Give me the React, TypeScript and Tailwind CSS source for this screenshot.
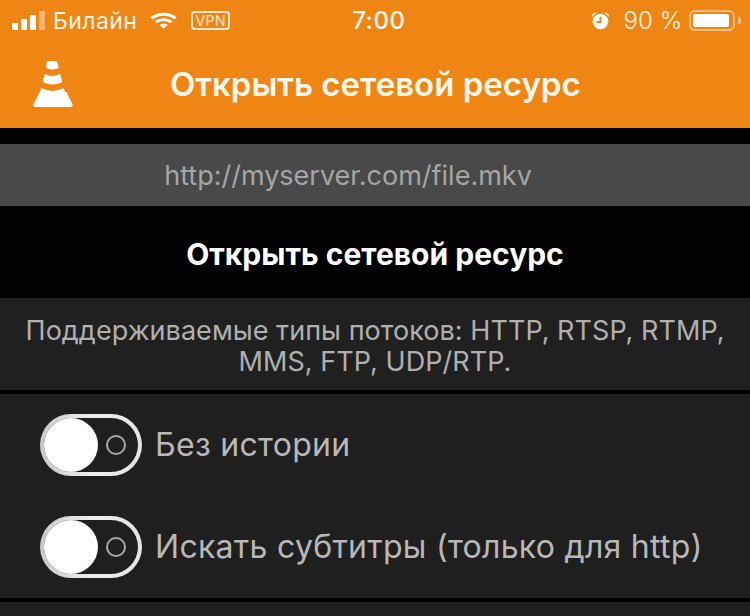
export default function App() {
  const font = { fontFamily: 'Inter, "Noto Sans", sans-serif' };
  const Toggle = () => (
    <div className="relative h-[62px] w-[102px] shrink-0 rounded-full bg-gradient-to-r from-[#c8c8c8] via-[#eeeeee] to-[#e4e4e4] p-[4px]">
      <div className="flex h-full w-full items-center rounded-full bg-[#1f1f1f]">
        <div className="h-[54px] w-[54px] rounded-full bg-white" />
        <div className="ml-[8px] h-[20px] w-[20px] rounded-full border-2 border-[#a8a8a8]" />
      </div>
    </div>
  );
  const Row = ({ label }: { label: string }) => (
    <div className="flex items-center pl-[40px]">
      <Toggle />
      <span className="ml-[13px] text-[32px] leading-[40px] tracking-[0.28px] text-[#b8b8b8] whitespace-nowrap">{label}</span>
    </div>
  );
  return (
    <div className="h-[616px] w-[750px] overflow-hidden bg-black" style={font}>
      <header className="h-[128px] bg-[#ef8614] text-white">
        <div className="flex h-[40px] items-center pl-[12px] pt-[1px]">
          <div className="flex h-[19px] items-end gap-[3px]">
            <div className="h-[7px] w-[6px] rounded-[1px] bg-white" />
            <div className="h-[11px] w-[6px] rounded-[1px] bg-white" />
            <div className="h-[15px] w-[6px] rounded-[1px] bg-white" />
            <div className="h-[19px] w-[6px] rounded-[1px] bg-[#f6b56f]" />
          </div>
          <span className="ml-[8px] text-[23px] leading-[30px] tracking-[0.4px] text-[#fff4e6]">Билайн</span>
          <svg className="ml-[13px]" width="27" height="17" viewBox="0 0 28 20" preserveAspectRatio="none" fill="none" stroke="white">
            <path d="M1.5 7.5C8.500 1 19.5 1 26.5 7.5" strokeWidth="3.4" />
            <path d="M6 12C10.5 8 17.5 8 22 12" strokeWidth="3.4" />
            <path d="M14 19.5L9.6 15.3C12 13.3 16 13.3 18.4 15.3Z" fill="white" stroke="none" />
          </svg>
          <div className="ml-[14px] flex h-[19px] w-[39px] items-center justify-center rounded-[4px] border-2 border-[#fde9d2] text-[14px] leading-none tracking-[0.5px] text-[#fde9d2]">VPN</div>
          <span className="ml-[122px] text-[24px] font-medium leading-[30px] tracking-[0.5px] text-[#fff8f0]">7:00</span>
          <svg className="ml-[186px]" width="19" height="19" viewBox="0 0 20 20" fill="white">
            <circle cx="10" cy="11" r="8.2" />
            <path d="M1 5.500C1.300 3 3 1.500 5 1.500L5.500 2.500C3.800 3 2.500 4.200 2 5.800ZM19 5.500C18.700 3 17 1.500 15 1.500L14.500 2.500C16.200 3 17.500 4.200 18 5.800Z" />
            <path d="M10 6V11.500H5.800" stroke="#ef8614" strokeWidth="2" fill="none" />
          </svg>
          <span className="ml-[13px] text-[24px] font-light leading-[30px] tracking-[0.1px] text-[#fff4e6]">90 %</span>
          <div className="ml-[7px] flex h-[21px] w-[46px] items-center rounded-[6px] border-2 border-[#f8bd7f] p-[2px]">
            <div className="h-full w-[36px] rounded-[2px] bg-white" />
          </div>
          <div className="ml-[3px] h-[7px] w-[3px] rounded-r-[2px] bg-[#f8bd7f]" />
        </div>
        <div className="flex h-[88px] items-center">
          <svg className="ml-[33px] shrink-0" width="40" height="46" viewBox="0 0 40 46" fill="white">
            <path d="M13.500 2Q14 0 16 0H22Q24 0 24.500 2L25.750 7Q19.500 10 13.250 7Z" />
            <path d="M11.750 13Q19.500 17 27.250 13L29.250 21Q19.500 26 9.750 21Z" />
            <path d="M8.250 27Q19.500 33 30.750 27L32 31H33.500L39.500 43.500Q40 46 37.500 46H2.500Q0 46 .500 43.500L6.500 31H7Z" />
          </svg>
          <h1 className="ml-[97px] text-[33px] font-semibold leading-[40px] text-[#fff7ec] whitespace-nowrap">Открыть сетевой ресурс</h1>
        </div>
      </header>
      <div className="mt-[16px] flex h-[62px] items-center justify-center bg-[#494949] pr-[54px] pt-[2px] text-[27px] text-[#a6a6a6]">
        http://myserver.com/file.mkv
      </div>
      <div className="flex h-[92px] items-center justify-center pt-[4px] text-[30px] font-bold text-white">
        Открыть сетевой ресурс
      </div>
      <div className="flex h-[92px] items-center justify-center bg-[#202020] pt-[4px] text-center text-[27px] leading-[31px] tracking-[0.05px] text-[#b0b0b0]">
        <p>Поддерживаемые типы потоков: HTTP, RTSP, RTMP,<br />MMS, FTP, UDP/RTP.</p>
      </div>
      <div className="mt-[4px] flex flex-col gap-[40px] bg-[#1f1f1f] py-[20px]">
        <Row label="Без истории" />
        <Row label="Искать субтитры (только для http)" />
      </div>
      <div className="mt-[4px] h-[14px] bg-[#1f1f1f]" />
    </div>
  );
}
